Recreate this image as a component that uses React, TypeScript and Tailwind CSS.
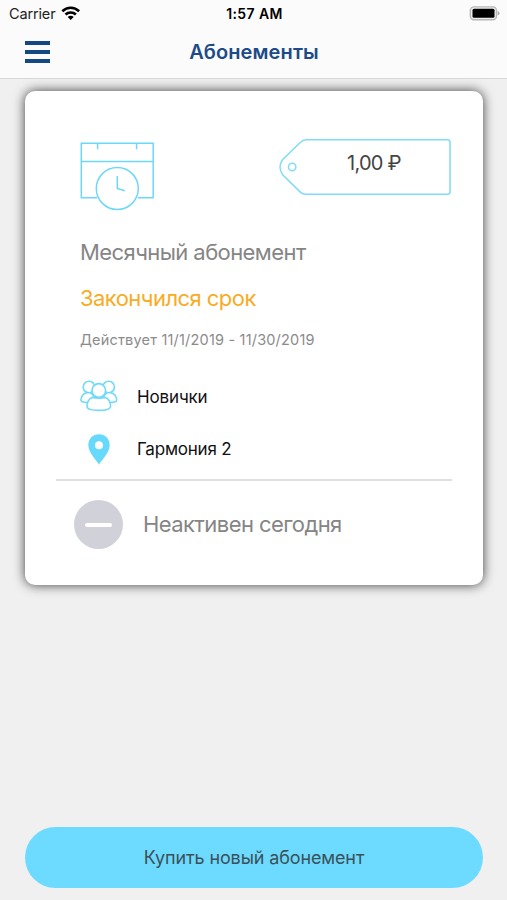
import type { ReactNode } from "react";

function WifiIcon() {
    return (
        <svg width="20" height="15" viewBox="0 0 20 15" fill="none" stroke="#000" strokeWidth="2.7">
            <path d="M1.3 5.2C6.2 .6 13.2 .6 18.1 5.2" />
            <path d="M4.5 8.5C7.4 5.8 12 5.8 14.9 8.5" />
            <path d="M9.7 13.9 6.7 10.9C8.4 9.4 11 9.4 12.7 10.9Z" fill="#000" stroke="none" />
        </svg>
    );
}

function BatteryIcon() {
    return (
        <svg width="31" height="15" viewBox="0 0 31 15">
            <rect x="1.3" y=".9" width="26.2" height="12.8" rx="3.6" fill="#eee" stroke="#b8b8b8" strokeWidth="1.4" />
            <rect x="3.5" y="2.8" width="22" height="9" rx="1.5" fill="#000" />
            <path d="M28.7 5Q30.5 5.8 30.5 7.3T28.7 9.6Z" fill="#a8a8a8" />
        </svg>
    );
}

function CalendarIcon() {
    return (
        <svg width="75" height="72" viewBox="0 0 75 72" fill="none" stroke="#6cd8f8" strokeWidth="1.5">
            <path d="M17 58.7H1.3V4.3H73.2V58.7H58M1.3 22.5H73.2M17.6 4.5V10.2M56.6 4.5V10.2" />
            <circle cx="37.3" cy="49.5" r="21" />
            <path d="M37.3 37V49.5L44.8 51.7" />
        </svg>
    );
}

function PriceTag({ children }: { children: ReactNode }) {
    return (
        <div className="relative h-[57px] w-[172px]">
            <svg width="172" height="57" viewBox="0 0 172 57" fill="none" stroke="#7fdcf7" strokeWidth="1.5">
                <path d="M27 .8H168.5Q171 .8 171 3.3V52.8Q171 55.3 168.5 55.3H27Q23.5 55.3 21 52.9L3.7 35.8Q-1.7 28.1 3.7 20.5L21 3.7Q24 .8 27 .8Z" />
                <circle cx="13.2" cy="28" r="3.7" />
            </svg>
            <span className="absolute top-[10px] left-[68px] text-[20px] leading-[28px] tracking-[-0.75px] whitespace-nowrap text-[#444]">
                {children}
            </span>
        </div>
    );
}

function GroupIcon() {
    return (
        <svg width="38" height="32" viewBox="0 0 38 32" fill="#fff" stroke="#6fdaf9" strokeWidth="1.6">
            <circle cx="9" cy="7" r="5.8" />
            <circle cx="28.6" cy="7" r="5.8" />
            <path d="M7 12.7C3.5 13 .9 16.5 .9 20Q.9 22.8 9 22.4L14 16 10.5 12.7Z" />
            <path d="M30.6 12.7C34.1 13 36.7 16.5 36.7 20Q36.7 22.8 28.6 22.4L23.6 16 27.1 12.7Z" />
            <circle cx="18.8" cy="10.4" r="6.8" />
            <path d="M12.3 17.4Q18.8 18.8 25.3 17.4C28.8 18.3 30.6 22.6 30.6 26.2Q30.6 30.4 18.8 30.4T7 26.2C7 22.6 8.8 18.3 12.3 17.4Z" />
        </svg>
    );
}

function PinIcon() {
    return (
        <svg width="22" height="31" viewBox="0 0 22 31">
            <path
                fillRule="evenodd"
                fill="#66d9fd"
                d="M11 .3C4.9 .3 .3 5 .3 11 .3 18.6 8.5 26.3 11 30.6 13.5 26.3 21.7 18.6 21.7 11 21.7 5 17.1 .3 11 .3ZM11 7.2A4 4 0 1 1 11 15.2 4 4 0 1 1 11 7.2Z"
            />
        </svg>
    );
}

export default function App() {
    return (
        <div className="flex h-[900px] w-[507px] flex-col overflow-hidden bg-[#f0f0f0] font-['Inter','Liberation_Sans',sans-serif]">
            <header className="z-10 h-[79px] shrink-0 border-b border-[#d8d8d8] bg-[#fbfbfb]">
                <div className="grid h-[27px] grid-cols-3 items-center pr-[7px] pl-[9px] text-[14.5px] text-[#222]">
                    <div className="flex items-center gap-[6px]">
                        <span className="tracking-[-0.15px]">Carrier</span>
                        <WifiIcon />
                    </div>
                    <div className="text-center text-[14px] font-semibold tracking-[0.4px] text-black">1:57 AM</div>
                    <div className="flex justify-end">
                        <BatteryIcon />
                    </div>
                </div>
                <div className="grid h-[50px] grid-cols-[1fr_auto_1fr] items-center pr-[24px] pl-[25px]">
                    <button className="flex w-[25px] flex-col gap-[5px]" aria-label="Меню">
                        <span className="h-[4px] bg-[#144882]" />
                        <span className="h-[4px] bg-[#144882]" />
                        <span className="h-[4px] bg-[#144882]" />
                    </button>
                    <h1 className="text-[20px] font-semibold tracking-[0.1px] text-[#1c4b87]">Абонементы</h1>
                </div>
            </header>

            <main className="mt-[12px] mr-[24px] ml-[25px] h-[494px] shrink-0 rounded-[10px] bg-white pt-[48px] shadow-[0_0_12px_0_rgba(0,0,0,0.75)]">
                <div className="flex items-start justify-between pr-[32px] pl-[55px]">
                    <CalendarIcon />
                    <PriceTag>1,00 ₽</PriceTag>
                </div>

                <div className="pl-[55px]">
                    <h2 className="mt-[25px] text-[22px] leading-[32px] tracking-[-0.58px] text-[#858585]">
                        Месячный абонемент
                    </h2>
                    <p className="mt-[14px] text-[22px] leading-[32px] tracking-[-0.55px] text-[#f9ab24]">Закончился срок</p>
                    <p className="mt-[15px] text-[14.5px] leading-[22px] tracking-[0.19px] text-[#8b8b8b]">
                        Действует 11/1/2019 - 11/30/2019
                    </p>
                </div>

                <div className="mt-[28px] flex h-[36px] items-center pl-[55px] text-[17px] tracking-[-0.15px] text-[#111]">
                    <div className="flex w-[57px] pb-[2px]">
                        <GroupIcon />
                    </div>
                    <span className="pt-px">Новички</span>
                </div>
                <div className="mt-[17px] flex h-[36px] items-center pl-[55px] text-[17px] tracking-[-0.22px] text-[#111]">
                    <div className="flex w-[57px] pb-[2px] pl-[8px]">
                        <PinIcon />
                    </div>
                    Гармония 2
                </div>

                <div className="mx-[31px] mt-[11px] h-[2px] bg-[#dfdfdf]" />

                <div className="mt-[19px] flex items-center gap-[20px] pl-[49px] text-[22px] tracking-[-0.58px] text-[#858585]">
                    <div className="flex size-[49px] items-center justify-center rounded-full bg-[#d1d2d9]">
                        <span className="h-[4px] w-[27px] rounded-full bg-white" />
                    </div>
                    Неактивен сегодня
                </div>
            </main>

            <button className="mt-auto mr-[24px] mb-[12px] ml-[25px] h-[61px] shrink-0 rounded-full bg-[#6cdbff] text-[18px] tracking-[-0.13px] text-[#3c5058]">
                Купить новый абонемент
            </button>
        </div>
    );
}
